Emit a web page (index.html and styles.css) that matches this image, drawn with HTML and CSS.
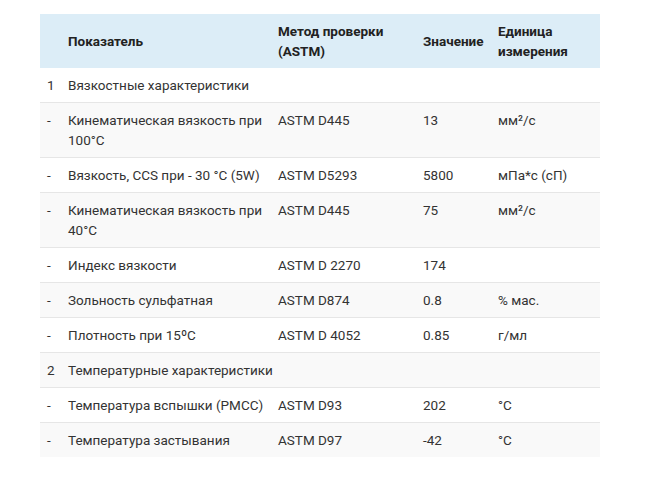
FILE: index.html
```html
<!DOCTYPE html>
<html lang="ru">
<head>
<meta charset="utf-8">
<link rel="stylesheet" href="styles.css">
</head>
<body>
<div class="wrap">
<table class="spec">
  <colgroup>
    <col class="c-num"><col class="c-name"><col class="c-method"><col class="c-val"><col class="c-unit">
  </colgroup>
  <thead>
    <tr><th></th><th>Показатель</th><th>Метод проверки (ASTM)</th><th>Значение</th><th>Единица измерения</th></tr>
  </thead>
  <tbody>
    <tr><td>1</td><td class="section" colspan="4">Вязкостные характеристики</td></tr>
    <tr><td>-</td><td>Кинематическая вязкость при 100°C</td><td>ASTM D445</td><td>13</td><td>мм²/с</td></tr>
    <tr><td>-</td><td>Вязкость, CCS при - 30 °C (5W)</td><td>ASTM D5293</td><td>5800</td><td>мПа*с (сП)</td></tr>
    <tr><td>-</td><td>Кинематическая вязкость при 40°C</td><td>ASTM D445</td><td>75</td><td>мм²/с</td></tr>
    <tr><td>-</td><td>Индекс вязкости</td><td>ASTM D 2270</td><td>174</td><td></td></tr>
    <tr><td>-</td><td>Зольность сульфатная</td><td>ASTM D874</td><td>0.8</td><td>% мас.</td></tr>
    <tr><td>-</td><td>Плотность при 15ºC</td><td>ASTM D 4052</td><td>0.85</td><td>г/мл</td></tr>
    <tr><td>2</td><td class="section" colspan="4">Температурные характеристики</td></tr>
    <tr><td>-</td><td>Температура вспышки (PMCC)</td><td>ASTM D93</td><td>202</td><td>°C</td></tr>
    <tr><td>-</td><td>Температура застывания</td><td>ASTM D97</td><td>-42</td><td>°C</td></tr>
  </tbody>
</table>
</div>
</body>
</html>
```

FILE: styles.css
```css
html, body {
  margin: 0;
  padding: 0;
  background: #ffffff;
}
.wrap {
  padding: 14px 0 0 40px;
}
.spec {
  width: 560px;
  border-collapse: collapse;
  table-layout: fixed;
  font-family: Roboto, "Liberation Sans", sans-serif;
  font-size: 13.5px;
  line-height: 20px;
  color: #333333;
}
.c-num { width: 20px; }
.c-name { width: 210px; }
.c-method { width: 145px; }
.c-val { width: 75px; }
.c-unit { width: 110px; }
.spec th {
  background: #dcedf7;
  color: #222222;
  font-weight: 700;
  text-align: left;
  vertical-align: middle;
  padding: 7px 8px 7px 8px;
  height: 40px;
}
.spec th:first-child, .spec td:first-child {
  padding-left: 7px;
  padding-right: 0;
}
.spec th:nth-child(2), .spec td:nth-child(2) {
  padding-right: 0;
}
.spec td {
  text-align: left;
  vertical-align: top;
  padding: 7px 8px 7px 8px;
  border-top: 1px solid #e6e6e6;
}
.spec td.section {
  white-space: nowrap;
}
.spec tbody tr:first-child td {
  border-top: none;
}
.spec tbody tr:nth-child(even) td {
  background: #f9f9f9;
}
```
